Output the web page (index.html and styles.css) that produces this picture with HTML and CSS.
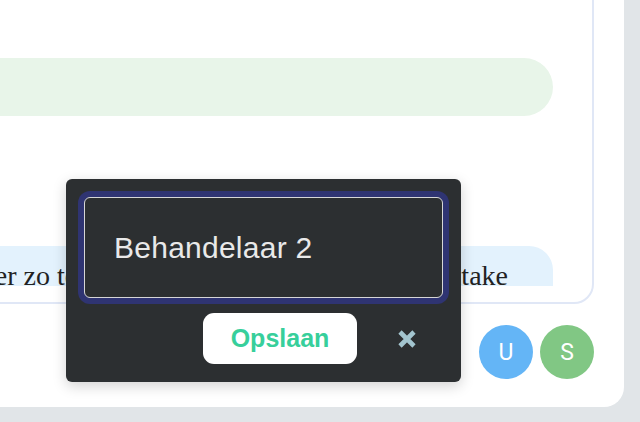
FILE: index.html
```html
<!DOCTYPE html>
<html lang="nl">
<head>
  <meta charset="UTF-8" />
  <title>Gesprek</title>
  <link rel="stylesheet" href="styles.css">
</head>
<body>
  <div class="card">
    <div class="panel">
      <div class="messages">
        <div class="bubble bubble-green"></div>
        <div class="bubble bubble-blue">
          <span>Dat ging eerder zo te zien tijdens het eerste uur in de intake</span>
        </div>
      </div>
    </div>

    <div class="participants">
      <span class="avatar avatar-blue">U</span>
      <span class="avatar avatar-green">S</span>
    </div>
  </div>

  <!-- rename popup -->
  <div class="popup">
    <input type="text" class="name-input" value="Behandelaar 2">
    <div class="actions">
      <button class="save-btn">Opslaan</button>
      <button class="close-btn" aria-label="Sluiten">
        <svg width="18" height="18" viewBox="0 0 18 18">
          <path d="M2 2 L16 16 M16 2 L2 16" stroke="#a3c5cf" stroke-width="4.6" fill="none" />
        </svg>
      </button>
    </div>
  </div>
</body>
</html>
```

FILE: styles.css
```css
* {
  box-sizing: border-box;
}

body {
  margin: 0;
  height: 100vh;
  padding-bottom: 15px;
  background: #e1e5e8;
  font-family: 'Liberation Sans', Arial, sans-serif;
  display: flex;
  flex-direction: column;
  overflow: hidden;
}

.card {
  flex: 1;
  min-height: 0;
  margin: -40px 16px 0 -60px;
  padding: 0 30px 28px 0;
  background: #fff;
  border-radius: 20px;
  display: flex;
  flex-direction: column;
}

.panel {
  flex: 1;
  min-height: 0;
  border: 2px solid #e0e7f6;
  border-radius: 20px;
  padding-bottom: 16px;
  display: flex;
  flex-direction: column;
}

.messages {
  flex: 1;
  min-height: 0;
  overflow: hidden;
  padding: 96px 39px 0 0;
}

.bubble-green {
  height: 58px;
  background: #e8f5e9;
  border-radius: 29px;
}

.bubble-blue {
  margin-top: 130px;
  padding: 13px 45px 30px 0;
  background: #e3f2fd;
  border-radius: 24px;
  display: flex;
  justify-content: flex-end;
  white-space: nowrap;
  font-family: 'Liberation Serif', 'Times New Roman', serif;
  font-size: 28px;
  line-height: 1.2;
  color: #222;
}

.participants {
  flex-shrink: 0;
  margin-top: 21px;
  display: flex;
  justify-content: flex-end;
  gap: 7px;
}

.avatar {
  width: 54px;
  height: 54px;
  border-radius: 50%;
  display: flex;
  align-items: center;
  justify-content: center;
  color: #fff;
  font-family: Roboto, sans-serif;
  font-size: 23px;
}

.avatar-blue {
  background: #64b5f6;
}

.avatar-green {
  background: #81c784;
}

.popup {
  position: absolute;
  left: 66px;
  top: 179px;
  width: 395px;
  padding: 18px;
  background: #2c2f31;
  border-radius: 6px;
  box-shadow: 0 4px 14px rgba(0, 0, 0, 0.18);
}

.name-input {
  display: block;
  width: 100%;
  height: 101px;
  padding: 0 29px;
  background: #2c2f31;
  color: #e9e9e9;
  border: 1px solid #d6d6d6;
  border-radius: 6px;
  box-shadow: 0 0 0 6px #2f3472;
  outline: none;
  font-family: 'Liberation Sans', Arial, sans-serif;
  font-size: 30px;
  letter-spacing: 0.25px;
}

.actions {
  margin-top: 15px;
  padding-right: 14px;
  display: flex;
  justify-content: flex-end;
  align-items: center;
  gap: 28px;
}

.save-btn {
  width: 154px;
  height: 51px;
  background: #fff;
  border: none;
  border-radius: 11px;
  color: #37cf9b;
  font-family: 'Liberation Sans', Arial, sans-serif;
  font-weight: bold;
  font-size: 25px;
  cursor: pointer;
}

.close-btn {
  width: 44px;
  height: 51px;
  padding: 0;
  background: none;
  border: none;
  display: flex;
  align-items: center;
  justify-content: center;
  cursor: pointer;
}
```
